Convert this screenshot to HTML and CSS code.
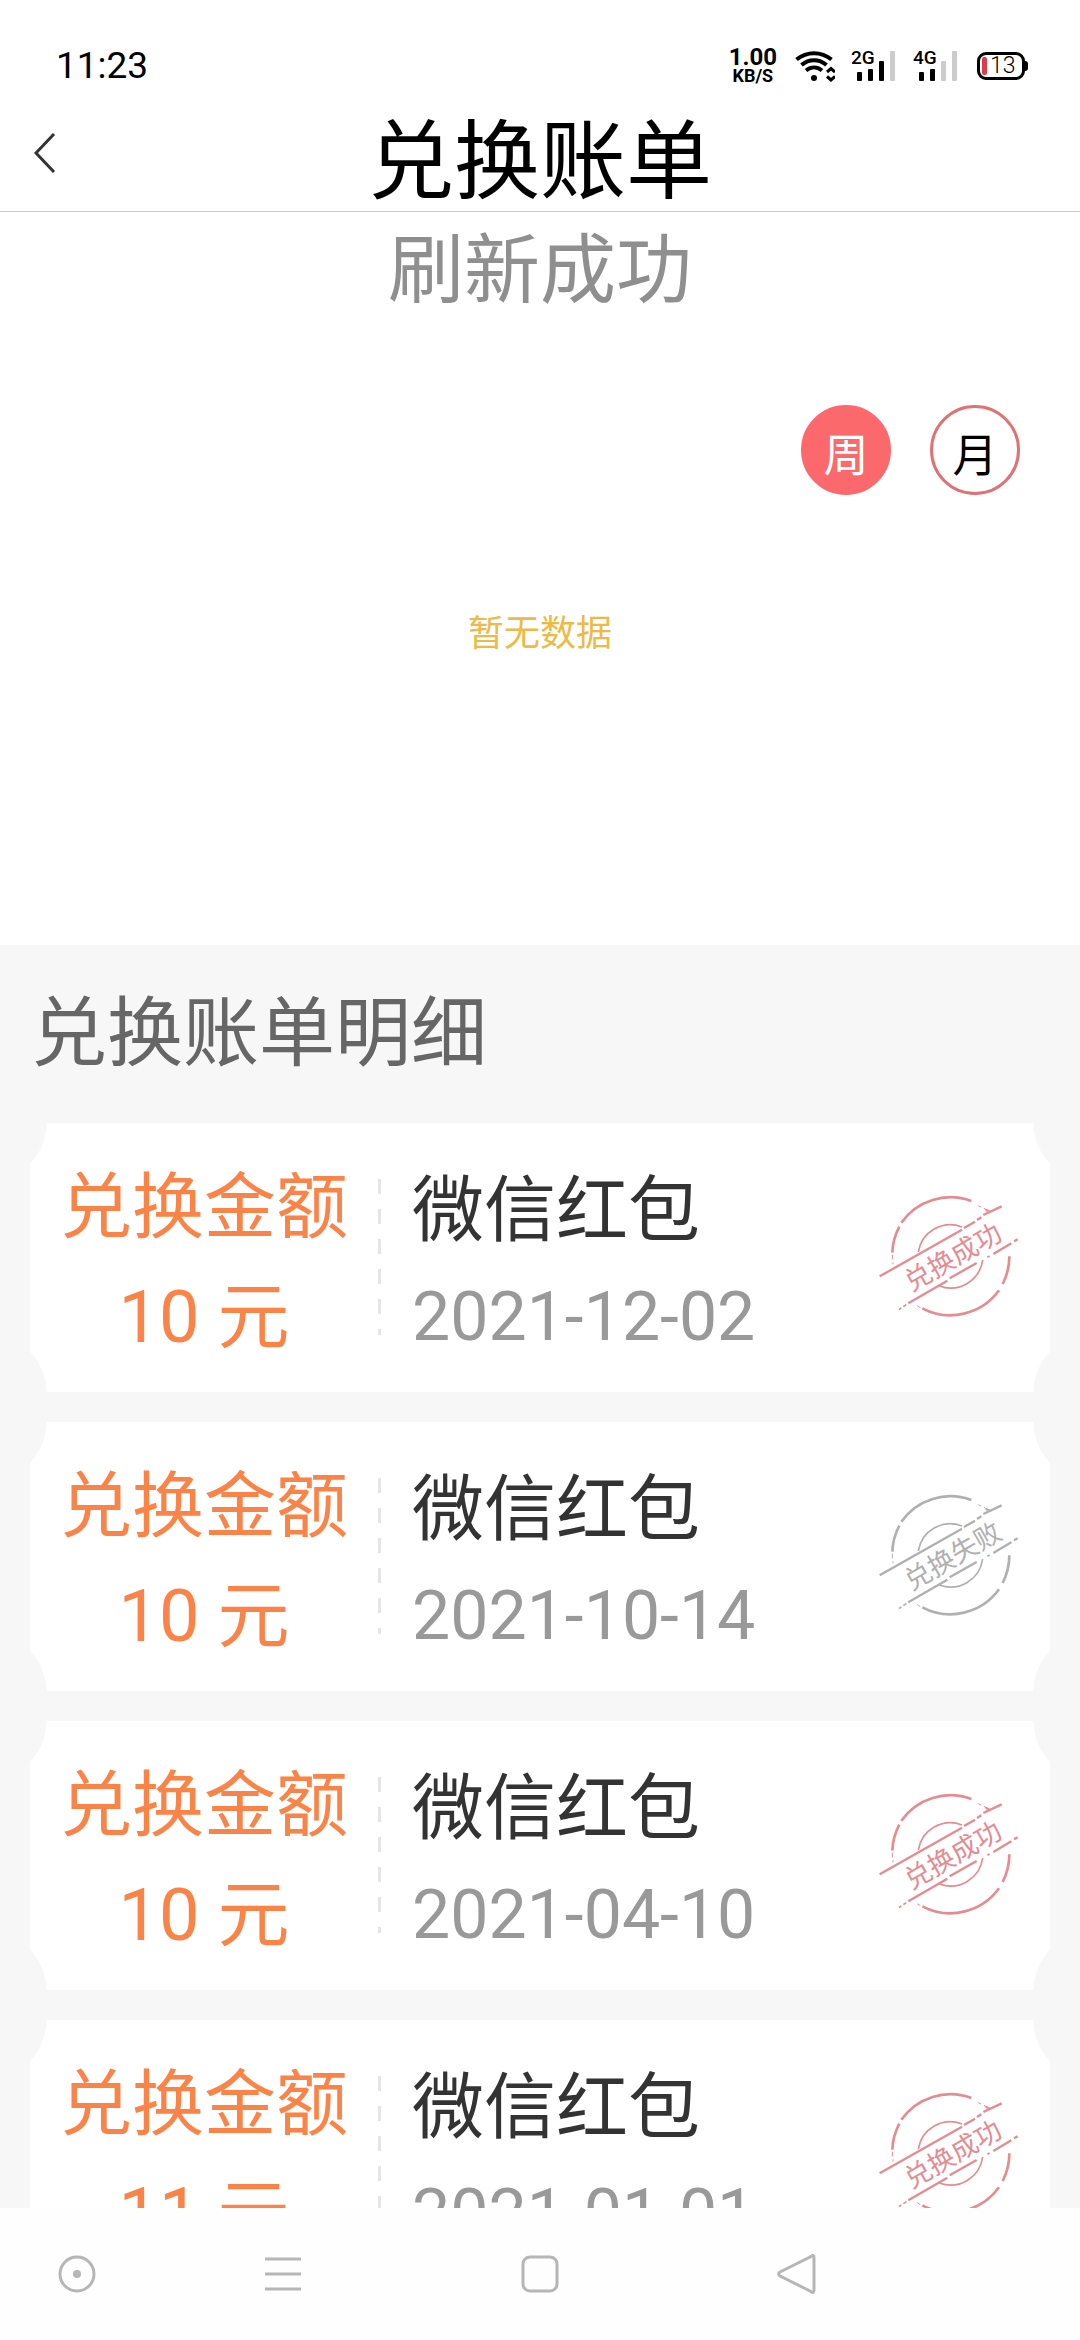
FILE: index.html
```html
<!DOCTYPE html>
<html lang="zh-CN">
<head>
<meta charset="utf-8">
<meta name="viewport" content="width=device-width, initial-scale=1">
<title>兑换账单</title>
<link rel="stylesheet" href="styles.css">
</head>
<body>
<svg class="defs" aria-hidden="true">
  <defs>
    <g id="stamp-frame" fill="none" stroke="currentColor">
      <g stroke-width="8">
        <path d="M157 426A180 180 0 0 1 178 348"/>
        <path d="M184 336A180 180 0 0 1 394 271"/>
        <path d="M508 437A180 180 0 0 1 488 520"/>
        <path d="M477 539A180 180 0 0 1 247 593"/>
      </g>
      <g stroke-width="3">
        <path d="M157 432v14M159 455v6M415 285l8 4M432 292l10 12M232 585l9 6"/>
        <path d="M235 424A97 97 0 0 1 366 349" stroke-width="5"/>
        <path d="M428 448A97 97 0 0 1 298 526" stroke-width="5"/>
      </g>
      <g stroke-width="7">
        <path d="M119 497L366 357M372 352L405 333M411 328L424 320M430 313L485 287"/>
        <path d="M437 296l14 8" stroke-width="5"/>
        <path d="M205 578L322 510M329 503L410 457M460 430L514 398M522 392L533 386"/>
        <path d="M177 597l7-5M190 588l9-6M442 440l7-4" stroke-width="5"/>
      </g>
    </g>
  </defs>
</svg>
<div class="app">
  <div class="status">
    <span class="clock">11:23</span>
    <div class="indicators">
      <div class="speed"><span class="speed-value">1.00</span><span class="speed-unit">KB/S</span></div>
      <svg class="wifi" viewBox="0 0 40 32" aria-hidden="true">
        <g fill="none" stroke="#000" stroke-width="4">
          <path d="M1.500 9.500C12 1 26 1 36.500 9.500"/>
          <path d="M6.500 15C14 8.500 24 8.500 31.500 15"/>
          <path d="M11 20.500C16 16.500 22 16.500 27 20.500"/>
          <path d="M32 22l4-3.500 4 3.500M32 26.500l4 3.500 4-3.500" stroke-width="3"/>
        </g>
        <circle cx="19" cy="28" r="3"/>
      </svg>
      <div class="signal">
        <span class="signal-type">2G</span>
        <svg viewBox="0 0 44 30" aria-hidden="true">
          <rect x="6" y="21" width="5" height="9" rx="1"/><rect x="17" y="18" width="5" height="12" rx="1"/><rect x="28" y="10" width="5" height="20" rx="1"/><rect class="weak" x="39" y="0" width="5" height="30" rx="1"/>
        </svg>
      </div>
      <div class="signal">
        <span class="signal-type">4G</span>
        <svg viewBox="0 0 44 30" aria-hidden="true">
          <rect x="6" y="21" width="5" height="9" rx="1"/><rect x="17" y="18" width="5" height="12" rx="1"/><rect class="weak" x="28" y="10" width="5" height="20" rx="1"/><rect class="weak" x="39" y="0" width="5" height="30" rx="1"/>
        </svg>
      </div>
      <div class="battery"><span class="battery-level"></span><span>13</span></div>
    </div>
  </div>

  <header class="header">
    <button class="back" type="button" aria-label="返回">
      <svg viewBox="0 0 22 40" aria-hidden="true"><path d="M20 1L2 20l18 19" fill="none" stroke="#333" stroke-width="3"/></svg>
    </button>
    <h1 class="title">兑换账单</h1>
  </header>

  <main class="content">
    <section class="chart">
      <p class="refresh">刷新成功</p>
      <div class="tabs">
        <button class="tab tab-active" type="button" aria-pressed="true">周</button>
        <button class="tab" type="button" aria-pressed="false">月</button>
      </div>
      <p class="empty">暂无数据</p>
    </section>

    <section class="bills">
      <h2 class="bills-title">兑换账单明细</h2>
      <ul class="list">
        <li class="card">
          <div class="amount"><span>兑换金额</span><span>10 元</span></div>
          <div class="divider"></div>
          <div class="detail"><span>微信红包</span><time class="date" datetime="2021-12-02">2021-12-02</time></div>
          <svg class="stamp" viewBox="105 217 450 450"><use href="#stamp-frame"/><text x="338" y="468" transform="rotate(-30 338 438)">兑换成功</text></svg>
        </li>
        <li class="card">
          <div class="amount"><span>兑换金额</span><span>10 元</span></div>
          <div class="divider"></div>
          <div class="detail"><span>微信红包</span><time class="date" datetime="2021-10-14">2021-10-14</time></div>
          <svg class="stamp stamp-failed" viewBox="105 217 450 450"><use href="#stamp-frame"/><text x="338" y="468" transform="rotate(-30 338 438)">兑换失败</text></svg>
        </li>
        <li class="card">
          <div class="amount"><span>兑换金额</span><span>10 元</span></div>
          <div class="divider"></div>
          <div class="detail"><span>微信红包</span><time class="date" datetime="2021-04-10">2021-04-10</time></div>
          <svg class="stamp" viewBox="105 217 450 450"><use href="#stamp-frame"/><text x="338" y="468" transform="rotate(-30 338 438)">兑换成功</text></svg>
        </li>
        <li class="card">
          <div class="amount"><span>兑换金额</span><span>11 元</span></div>
          <div class="divider"></div>
          <div class="detail"><span>微信红包</span><time class="date" datetime="2021-01-01">2021-01-01</time></div>
          <svg class="stamp" viewBox="105 217 450 450"><use href="#stamp-frame"/><text x="338" y="468" transform="rotate(-30 338 438)">兑换成功</text></svg>
        </li>
      </ul>
    </section>
  </main>

  <nav class="navbar">
    <button type="button" aria-label="助手"><svg viewBox="0 0 40 40"><circle cx="20" cy="20" r="17"/><circle class="dot" cx="20" cy="20" r="4"/></svg></button>
    <button type="button" aria-label="菜单"><svg viewBox="0 0 40 40"><path d="M2 5h36M2 20h36M2 35h36"/></svg></button>
    <button type="button" aria-label="主页"><svg viewBox="0 0 40 40"><rect x="3" y="3" width="34" height="34" rx="7"/></svg></button>
    <button type="button" aria-label="后退"><svg viewBox="0 0 40 40"><path d="M34 2.500Q37 0 37 4v32q0 4-3 1.500L3 22q-3-2 0-4z"/></svg></button>
  </nav>
</div>
</body>
</html>
```

FILE: styles.css
```css
* {
  box-sizing: border-box;
  margin: 0;
  padding: 0;
}

body {
  background: #fff;
  color: #000;
  font-family: "Noto Sans CJK SC", sans-serif;
}

button {
  border: 0;
  background: none;
  color: inherit;
  font: inherit;
}

.defs {
  display: none;
}

.app {
  display: flex;
  flex-direction: column;
  height: 100vh;
}

/* Status bar */
.status {
  flex: none;
  display: flex;
  align-items: center;
  justify-content: space-between;
  height: 94px;
  padding: 38px 51px 0 56px;
  font-family: Roboto, sans-serif;
}

.clock {
  font-size: 37px;
  line-height: 56px;
}

.indicators {
  display: flex;
  align-items: center;
  gap: 18px;
}

.speed {
  display: flex;
  flex-direction: column;
  align-items: center;
  font-weight: 700;
}

.speed-value {
  font-size: 24px;
  line-height: 20px;
}

.speed-unit {
  font-size: 18px;
  line-height: 18px;
}

.wifi {
  width: 40px;
  height: 32px;
  margin-right: -2px;
}

.signal {
  position: relative;
  height: 30px;
}

.signal svg {
  display: block;
  width: 44px;
  height: 30px;
}

.signal-type {
  position: absolute;
  top: 0;
  left: 0;
  font-size: 19px;
  font-weight: 500;
  line-height: 14px;
}

.weak {
  fill: #ccc;
}

.battery {
  position: relative;
  display: flex;
  align-items: center;
  gap: 3px;
  width: 48px;
  height: 28px;
  margin-left: 2px;
  margin-right: 4px;
  padding-left: 2px;
  border: 3px solid #000;
  border-radius: 9px;
  font-size: 23px;
  font-weight: 300;
  line-height: 22px;
}

.battery::after {
  content: "";
  position: absolute;
  right: -6px;
  top: 6px;
  width: 3px;
  height: 10px;
  border-radius: 0 3px 3px 0;
  background: #000;
}

.battery-level {
  width: 5px;
  height: 18px;
  border-radius: 2px;
  background: #dc3c4b;
}

/* Page header */
.header {
  flex: none;
  display: grid;
  grid-template-columns: 92px 1fr 92px;
  align-items: center;
  height: 118px;
  border-bottom: 1px solid #ccc;
}

.back {
  display: flex;
  align-items: center;
  height: 100%;
  padding-left: 34px;
}

.back svg {
  width: 22px;
  height: 40px;
}

.title {
  padding-top: 4px;
  font-size: 86px;
  font-weight: 400;
  line-height: 112px;
  text-align: center;
}

.content {
  flex: 1;
  min-height: 0;
  overflow: hidden;
}

/* Chart area */
.chart {
  padding-bottom: 288px;
  text-align: center;
}

.refresh {
  color: #8f8f8f;
  font-size: 76px;
  line-height: 104px;
}

.tabs {
  display: flex;
  justify-content: flex-end;
  gap: 39px;
  padding: 89px 60px 108px;
}

.tab {
  width: 90px;
  height: 90px;
  padding-top: 5px;
  border: 3px solid #e07275;
  border-radius: 50%;
  font-size: 45px;
  line-height: 66px;
}

.tab-active {
  border-color: #fb696d;
  background: #fb696d;
  color: #fff;
}

.empty {
  color: #edba46;
  font-size: 36px;
  line-height: 54px;
}

/* Bill list */
.bills {
  padding: 0 30px 30px;
  background: #f7f7f7;
}

.bills-title {
  padding: 1px 0 15px 1px;
  color: #666;
  font-size: 76px;
  font-weight: 400;
  line-height: 162px;
}

.list {
  display: flex;
  flex-direction: column;
  gap: 30px;
  list-style: none;
}

.card {
  display: grid;
  grid-template-columns: 348px 3px 1fr 150px;
  height: 269px;
  padding-right: 25px;
  font-family: Roboto, "Noto Sans CJK SC", sans-serif;
  font-size: 72px;
  background:
    radial-gradient(circle 59px at -42px 0, #f7f7f7 58px, #fff 59px) 0 0 / 50% 50%,
    radial-gradient(circle 59px at calc(100% + 42px) 0, #f7f7f7 58px, #fff 59px) 100% 0 / 50% 50%,
    radial-gradient(circle 59px at -42px 100%, #f7f7f7 58px, #fff 59px) 0 100% / 50% 50%,
    radial-gradient(circle 59px at calc(100% + 42px) 100%, #f7f7f7 58px, #fff 59px) 100% 100% / 50% 50%,
    #fff;
  background-repeat: no-repeat;
}

.amount {
  display: flex;
  flex-direction: column;
  align-items: center;
  padding-top: 30px;
  color: #fa8448;
  line-height: 110px;
}

.divider {
  height: 156px;
  margin-top: 56px;
  background: repeating-linear-gradient(#e5e5e5 0 15px, transparent 15px 30px);
}

.detail {
  display: flex;
  flex-direction: column;
  padding: 35px 0 0 31px;
  color: #333;
  line-height: 106px;
}

.date {
  color: #999;
  font-size: 68px;
}

.stamp {
  align-self: center;
  width: 150px;
  height: 150px;
  color: #e58b92;
}

.stamp-failed {
  color: #b0b0b0;
}

.stamp text {
  fill: currentColor;
  font-family: "Noto Sans CJK SC", sans-serif;
  font-size: 80px;
  text-anchor: middle;
}

/* System navigation */
.navbar {
  flex: none;
  display: grid;
  grid-template-columns: 154px 1fr 1fr 1fr 154px;
  height: 132px;
  background: #fefefe;
}

.navbar button {
  display: flex;
  align-items: center;
  justify-content: center;
}

.navbar svg {
  width: 40px;
  height: 40px;
  fill: none;
  stroke: #b6b6b6;
  stroke-width: 3;
}

.navbar .dot {
  fill: #b6b6b6;
  stroke: none;
}
```
